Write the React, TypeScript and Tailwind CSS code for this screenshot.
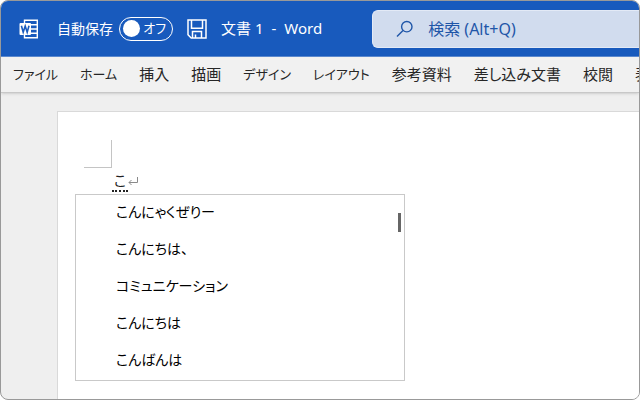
import { useState } from "react";

const tabs = [
  { name: "ファイル", kana: true },
  { name: "ホーム", kana: true },
  { name: "挿入", kana: false },
  { name: "描画", kana: false },
  { name: "デザイン", kana: true },
  { name: "レイアウト", kana: true },
  { name: "参考資料", kana: false },
  { name: "差し込み文書", kana: false },
  { name: "校閲", kana: false },
  { name: "表示", kana: false },
];

const candidates = ["こんにゃくぜりー", "こんにちは、", "コミュニケーション", "こんにちは", "こんばんは"];

function WordIcon() {
  return (
    <svg viewBox="0 0 20 20" className="size-5 shrink-0" fill="none" aria-hidden="true">
      <path d="M5.5 4V1.2h12.8v17.6H5.5V16" stroke="#fff" strokeWidth="1.4" />
      <path d="M12 5.7h6M12 10h6M12 14.3h6" stroke="#fff" strokeWidth="1.4" />
      <rect x="0.5" y="4" width="11.5" height="12" rx="1" fill="#fff" />
      <path d="M2.4 6.8l1.8 6.4 2-6.2 2 6.2L10 6.8" stroke="#185abd" strokeWidth="1.6" />
    </svg>
  );
}

function SaveIcon() {
  return (
    <svg viewBox="0 0 20 20" className="size-5" fill="none" stroke="#fff" strokeWidth="1.5" aria-hidden="true">
      <path d="M1 1h18v18H4.2L1 15.8z" />
      <path d="M4.5 1v8.3h11V1" />
      <path d="M5.5 19v-6.5h9V19M8.5 19v-3.5" />
    </svg>
  );
}

function SearchIcon() {
  return (
    <svg viewBox="0 0 18 18" className="size-[18px] shrink-0" fill="none" stroke="#1f56a8" strokeWidth="1.4" aria-hidden="true">
      <circle cx="10.8" cy="6.7" r="5.2" />
      <path d="M7 10.5L1 16.6" />
    </svg>
  );
}

function TitleBar() {
  const [autoSave, setAutoSave] = useState(false);
  return (
    <header className="flex h-14 shrink-0 items-center border-b border-[#5c8bd2] bg-[#185abd] pl-[18px] text-[15px] text-white">
      <WordIcon />
      <span id="autosave" className="ml-[18px] shrink-0 text-sm">自動保存</span>
      <button
        type="button"
        role="switch"
        aria-checked={autoSave}
        aria-labelledby="autosave"
        onClick={() => setAutoSave(!autoSave)}
        className="ml-1.5 flex h-6 w-[54px] shrink-0 items-center justify-between rounded-full border border-white pr-1.5 pl-[3px] text-[13px]"
      >
        <span className="size-[17px] rounded-full bg-white" />
        {autoSave ? "オン" : "オフ"}
      </button>
      <button type="button" aria-label="上書き保存" className="ml-3.5 shrink-0">
        <SaveIcon />
      </button>
      <h1 className="ml-3.5 flex shrink-0 gap-2">
        <span>文書 1</span>
        <span>-</span>
        <span>Word</span>
      </h1>
      <label className="ml-[50px] flex h-[38px] min-w-0 flex-1 items-center gap-3.5 rounded-l-md border border-r-0 border-[#e3eaf6] bg-[#d1dcee] pl-[23px]">
        <SearchIcon />
        <input
          type="text"
          aria-label="検索"
          placeholder="検索 (Alt+Q)"
          className="w-full min-w-0 bg-transparent text-base outline-none placeholder:text-[#1f56a8]"
        />
      </label>
    </header>
  );
}

function Ribbon() {
  return (
    <nav className="flex h-9 shrink-0 items-center gap-[22px] overflow-hidden border-b border-[#c8c8c8] bg-[#f1f1f1] pl-3 text-[15px] text-[#262626] shadow-sm">
      {tabs.map(({ name, kana }) => (
        <button key={name} type="button" className={kana ? "shrink-0 whitespace-nowrap text-[13px]" : "shrink-0 whitespace-nowrap"}>
          {name}
        </button>
      ))}
    </nav>
  );
}

function Candidates() {
  return (
    <div className="absolute top-full -left-[37px] flex w-[330px] border border-[#c9c9c9] bg-white pr-[3px]">
      <ul role="listbox" aria-label="変換候補" className="flex-1 text-sm text-black">
        {candidates.map((word) => (
          <li key={word} role="option" aria-selected={false} className="flex h-[37px] items-center pb-1 pl-10">
            {word}
          </li>
        ))}
      </ul>
      <div className="mt-[18px] h-[19px] w-[3px] bg-[#666]" />
    </div>
  );
}

export default function App() {
  return (
    <div className="h-screen bg-white">
      <div
        className="flex h-full flex-col overflow-hidden rounded-lg border border-[#999] bg-[#efefef] font-['Noto_Sans','Noto_Sans_CJK_JP',sans-serif]"
        style={{ fontFeatureSettings: '"palt"' }}
      >
        <TitleBar />
        <Ribbon />
        <main className="flex min-h-0 flex-1 pt-[18px] pl-14">
          <div className="flex-1 border-t border-l border-[#d9d9d9] bg-white pt-7 pl-[26px]">
            <div className="size-7 border-r border-b border-[#c4c4c4]" />
            <div className="relative ml-7 flex h-[26px] items-end text-sm text-[#222]">
              <span className="mb-0.5 flex h-5 w-4 items-center justify-center border-b-2 border-dotted border-[#222]">こ</span>
              <svg viewBox="0 0 10 10" className="mb-2 size-[10px]" fill="none" stroke="#8a8a8a" aria-hidden="true">
                <path d="M9.5 1v5.5H1M3.5 4L1 6.5 3.5 9" />
              </svg>
              <Candidates />
            </div>
          </div>
        </main>
      </div>
    </div>
  );
}
